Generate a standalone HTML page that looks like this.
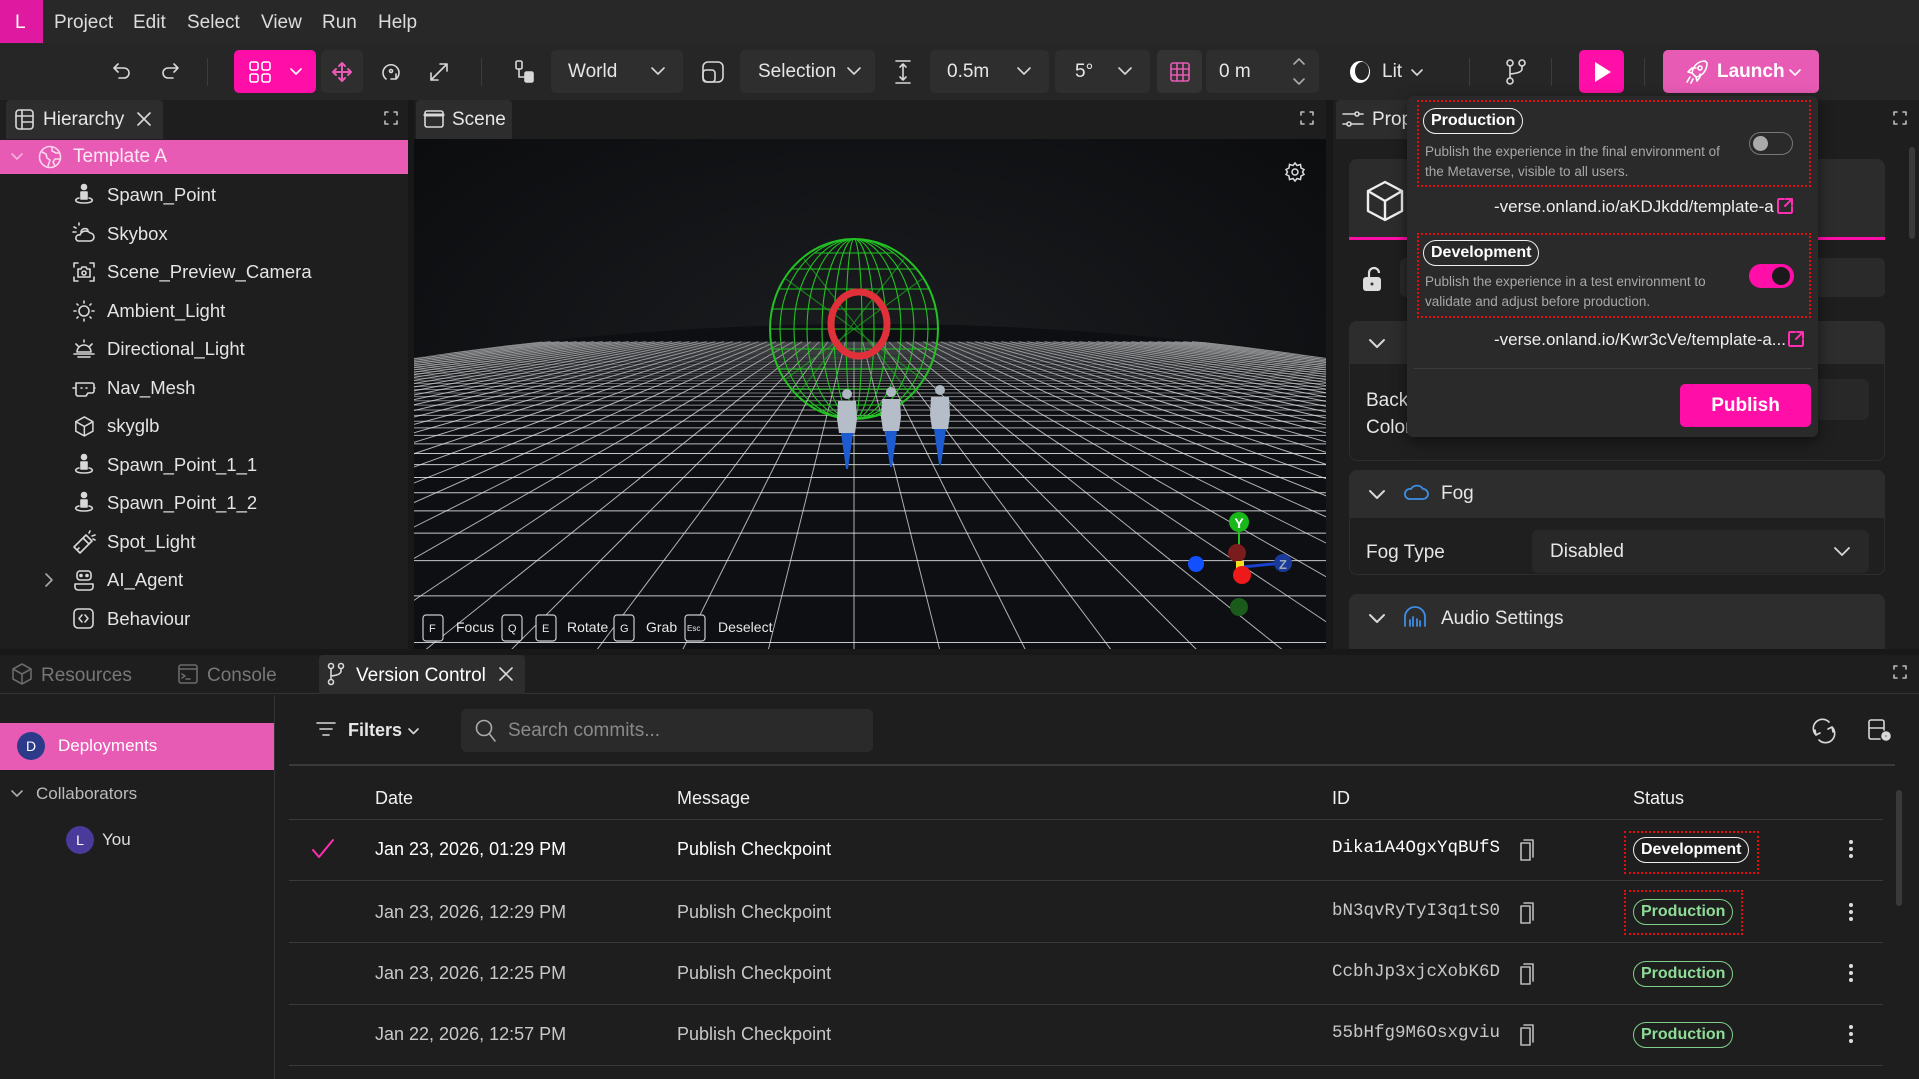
<!DOCTYPE html>
<html><head><meta charset="utf-8">
<style>
*{box-sizing:border-box;margin:0;padding:0}
html,body{width:1919px;height:1079px;overflow:hidden}
body{background:#1e1e1e;font-family:"Liberation Sans",sans-serif;color:#e6e6e6;position:relative}
.a{position:absolute}
.t{position:absolute;white-space:nowrap;line-height:1}
svg{position:absolute;overflow:visible}
.ic{fill:none;stroke:#d8d8d8;stroke-width:1.6;stroke-linecap:round;stroke-linejoin:round}
.btn{position:absolute;background:#2e2e2e;border-radius:5px;top:50px;height:43px}
.sep{position:absolute;top:58px;width:1px;height:28px;background:#3c3c3c}
.hi{font-size:18.5px;color:#e4e4e4}
.row{position:absolute;left:289px;width:1606px;height:1px;background:#3a3a3a}
.pill{position:absolute;height:26px;border-radius:13px;font-size:16px;font-weight:bold;padding:0 7px;line-height:23px}
</style></head><body>

<!-- menu bar -->
<div class="a" style="left:0;top:0;width:1919px;height:44px;background:#282828"></div>
<div class="a" style="left:0;top:0;width:43px;height:43px;background:#e01aa0"></div>
<div class="t" style="left:15px;top:13px;font-size:19px;color:#fff">L</div>
<div class="t" style="left:54px;top:13px;font-size:19px;color:#dcdcdc">Project</div>
<div class="t" style="left:133px;top:13px;font-size:19px;color:#dcdcdc">Edit</div>
<div class="t" style="left:187px;top:13px;font-size:19px;color:#dcdcdc">Select</div>
<div class="t" style="left:261px;top:13px;font-size:19px;color:#dcdcdc">View</div>
<div class="t" style="left:322px;top:13px;font-size:19px;color:#dcdcdc">Run</div>
<div class="t" style="left:378px;top:13px;font-size:19px;color:#dcdcdc">Help</div>

<!-- toolbar -->
<div class="a" style="left:0;top:44px;width:1919px;height:56px;background:#262626"></div>
<svg style="left:112px;top:61px" width="20" height="20" class="ic"><path d="M6 3 L2 7 L6 11 M2 7 H12 a5 5 0 0 1 0 10 H7"/></svg>
<svg style="left:160px;top:61px" width="20" height="20" class="ic"><path d="M14 3 L18 7 L14 11 M18 7 H8 a5 5 0 0 0 0 10 H13"/></svg>
<div class="sep" style="left:207px"></div>
<div class="btn" style="left:234px;width:82px;background:#ff0fa8"></div>
<svg style="left:249px;top:61px" width="22" height="22" class="ic"><g stroke="#fff"><rect x="1" y="1" width="8" height="8" rx="2"/><rect x="13" y="1" width="8" height="8" rx="2"/><rect x="1" y="13" width="8" height="8" rx="2"/><rect x="13" y="13" width="8" height="8" rx="2"/></g></svg>
<svg style="left:290px;top:68px" width="12" height="8" class="ic"><path d="M1 1 L6 6 L11 1" stroke="#fff"/></svg>
<div class="btn" style="left:321px;width:42px"></div>
<svg style="left:331px;top:61px" width="22" height="22" class="ic"><g stroke="#e85bb5" stroke-width="2"><path d="M11 2 V20 M2 11 H20 M8 5 L11 2 L14 5 M8 17 L11 20 L14 17 M5 8 L2 11 L5 14 M17 8 L20 11 L17 14"/></g></svg>
<svg style="left:380px;top:60px" width="22" height="24" class="ic"><path d="M6 19 A8 8 0 1 1 16 19 M16 19 L16 14 M16 19 L11 19"/><circle cx="11" cy="11" r="1.5"/></svg>
<svg style="left:428px;top:61px" width="22" height="22" class="ic"><path d="M3 19 L19 3 M12 3 H19 V10 M3 12 V19 H10"/></svg>
<div class="sep" style="left:481px"></div>
<svg style="left:514px;top:59px" width="22" height="26" class="ic"><rect x="2" y="2" width="6" height="8" rx="1.5"/><rect x="11" y="13" width="8" height="10" rx="1.5" fill="#d8d8d8"/><path d="M5 10 V18 H11"/></svg>
<div class="btn" style="left:551px;width:132px"></div>
<div class="t" style="left:568px;top:62px;font-size:19px">World</div>
<svg style="left:651px;top:67px" width="14" height="9" class="ic"><path d="M1 1 L7 7 L13 1"/></svg>
<svg style="left:702px;top:61px" width="22" height="22" class="ic"><rect x="1" y="1" width="20" height="20" rx="5"/><rect x="1" y="9" width="12" height="12" rx="3"/></svg>
<div class="btn" style="left:740px;width:135px"></div>
<div class="t" style="left:758px;top:62px;font-size:19px">Selection</div>
<svg style="left:847px;top:67px" width="14" height="9" class="ic"><path d="M1 1 L7 7 L13 1"/></svg>
<svg style="left:894px;top:59px" width="18" height="26" class="ic"><path d="M2 2 H16 M2 24 H16 M9 5 V21 M6 8 L9 5 L12 8 M6 18 L9 21 L12 18"/></svg>
<div class="btn" style="left:930px;width:119px"></div>
<div class="t" style="left:947px;top:62px;font-size:19px">0.5m</div>
<svg style="left:1017px;top:67px" width="14" height="9" class="ic"><path d="M1 1 L7 7 L13 1"/></svg>
<div class="btn" style="left:1055px;width:95px"></div>
<div class="t" style="left:1075px;top:62px;font-size:19px">5°</div>
<svg style="left:1118px;top:67px" width="14" height="9" class="ic"><path d="M1 1 L7 7 L13 1"/></svg>
<div class="btn" style="left:1157px;width:45px;background:#333"></div>
<svg style="left:1170px;top:62px" width="20" height="20" class="ic"><g stroke="#e85bb5" stroke-width="1.6"><rect x="1" y="1" width="18" height="18" rx="2"/><path d="M7 1 V19 M13 1 V19 M1 7 H19 M1 13 H19"/></g></svg>
<div class="btn" style="left:1206px;width:113px"></div>
<div class="t" style="left:1219px;top:62px;font-size:19px">0 m</div>
<svg style="left:1293px;top:58px" width="12" height="28" class="ic"><path d="M1 6 L6 1 L11 6 M1 21 L6 26 L11 21" stroke="#aaa"/></svg>
<svg style="left:1348px;top:59px" width="24" height="26"><ellipse cx="12" cy="13" rx="10" ry="11" fill="#fff"/><ellipse cx="14" cy="12" rx="7" ry="9" fill="#262626"/></svg>
<div class="t" style="left:1382px;top:62px;font-size:19px">Lit</div>
<svg style="left:1411px;top:69px" width="12" height="8" class="ic"><path d="M1 1 L6 6 L11 1"/></svg>
<div class="sep" style="left:1469px"></div>
<svg style="left:1505px;top:59px" width="22" height="26" class="ic"><circle cx="5" cy="4" r="3"/><circle cx="17" cy="4" r="3"/><circle cx="5" cy="22" r="3"/><path d="M5 7 V19 M17 7 V10 Q17 14 5 15"/></svg>
<div class="sep" style="left:1551px"></div>
<div class="btn" style="left:1579px;width:45px;background:#ff0fa8"></div>
<svg style="left:1593px;top:61px" width="20" height="22"><path d="M2 1 L18 11 L2 21 Z" fill="#fff"/></svg>
<div class="sep" style="left:1644px"></div>
<div class="btn" style="left:1663px;width:156px;background:#e85bb5"></div>
<svg style="left:1685px;top:59px" width="24" height="26" class="ic"><g stroke="#fff"><path d="M20 2 C12 2 8 8 7 14 L11 18 C17 17 22 12 22 4 Z M7 14 L3 13 L7 9 H11 M11 18 L12 22 L15 18 V15 M5 18 L2 23 M8 20 L6 24"/><circle cx="15" cy="9" r="2"/></g></svg>
<div class="t" style="left:1717px;top:62px;font-size:19px;font-weight:bold;color:#fff">Launch</div>
<svg style="left:1789px;top:69px" width="12" height="8" class="ic"><path d="M1 1 L6 6 L11 1" stroke="#fff"/></svg>

<!-- panel tab rows -->
<div class="a" style="left:0;top:100px;width:1919px;height:39px;background:#1e1e1e"></div>
<div class="a" style="left:6px;top:100px;width:157px;height:39px;background:#2d2d2d;border-radius:4px 4px 0 0"></div>
<svg style="left:15px;top:109px" width="20" height="22" class="ic"><rect x="1" y="1" width="17" height="19" rx="3"/><path d="M1 7 H18 M7 1 V20 M7 13 H18"/></svg>
<div class="t" style="left:43px;top:110px;font-size:19px">Hierarchy</div>
<svg style="left:137px;top:112px" width="14" height="14" class="ic"><path d="M1 1 L13 13 M13 1 L1 13"/></svg>
<svg style="left:384px;top:111px" width="14" height="14" class="ic"><path d="M1 4 V1 H4 M10 1 H13 V4 M13 10 V13 H10 M4 13 H1 V10" stroke="#bbb"/></svg>
<div class="a" style="left:408px;top:100px;width:6px;height:549px;background:#181818"></div>
<div class="a" style="left:416px;top:100px;width:96px;height:39px;background:#2d2d2d;border-radius:4px 4px 0 0"></div>
<svg style="left:424px;top:110px" width="20" height="18" class="ic"><rect x="1" y="1" width="18" height="16" rx="2"/><path d="M1 5 H19" stroke-width="3"/></svg>
<div class="t" style="left:452px;top:110px;font-size:19px">Scene</div>
<svg style="left:1300px;top:111px" width="14" height="14" class="ic"><path d="M1 4 V1 H4 M10 1 H13 V4 M13 10 V13 H10 M4 13 H1 V10" stroke="#bbb"/></svg>
<div class="a" style="left:1326px;top:100px;width:7px;height:549px;background:#181818"></div>
<div class="a" style="left:1336px;top:100px;width:80px;height:39px;background:#2d2d2d;border-radius:4px 4px 0 0"></div>
<svg style="left:1342px;top:108px" width="22" height="22" class="ic"><path d="M1 6 H13 M17 6 H21 M1 16 H5 M9 16 H21"/><circle cx="15" cy="6" r="2"/><circle cx="7" cy="16" r="2"/></svg>
<div class="t" style="left:1372px;top:110px;font-size:19px">Prop</div>
<svg style="left:1893px;top:111px" width="14" height="14" class="ic"><path d="M1 4 V1 H4 M10 1 H13 V4 M13 10 V13 H10 M4 13 H1 V10" stroke="#bbb"/></svg>

<!-- hierarchy -->
<div class="a" style="left:0;top:140px;width:408px;height:34px;background:#e85bb5"></div>
<svg style="left:11px;top:153px" width="12" height="8" class="ic"><path d="M1 1 L6 6 L11 1" stroke="#f5b3dc"/></svg>
<svg style="left:38px;top:145px" width="24" height="24" class="ic"><g stroke="#fbd5ec"><circle cx="12" cy="12" r="10.5"/><path d="M4 7 L8 9 L9 13 L12 15 L10 21 M14 2 L14 6 L18 8 L21 8 M22 14 L17 14 L15 17 L17 21"/></g></svg>
<div class="t" style="left:73px;top:147px;font-size:19px;color:#fde9f5">Template A</div>

<svg style="left:72px;top:184px" width="24" height="420" class="ic">
<g><circle cx="12" cy="3" r="2.5" fill="#d8d8d8"/><path d="M9 8 H15 V15 H9 Z" fill="#d8d8d8"/><path d="M7 14 C2 15 2 19 12 19 C22 19 22 15 17 14"/></g>
<g transform="translate(0,39)"><path d="M9 9 A4 4 0 0 1 16 7 M4 5 L2 4 M7 2 L7 0 M4 9 H1 M6 18 H18 A4 4 0 0 0 18 10 A6 6 0 0 0 8 12 A3 3 0 0 0 6 18"/></g>
<g transform="translate(0,77)"><path d="M2 6 V2 H6 M18 2 H22 V6 M22 16 V20 H18 M6 20 H2 V16 M6 8 H9 L10 6 H14 L15 8 H18 V16 H6 Z"/><circle cx="12" cy="12" r="2"/></g>
<g transform="translate(0,116)"><circle cx="12" cy="11" r="5"/><path d="M12 1 V3 M12 19 V21 M2 11 H4 M20 11 H22 M5 4 L6 5 M18 17 L19 18 M19 4 L18 5 M6 17 L5 18"/></g>
<g transform="translate(0,154)"><path d="M5 14 A7 7 0 0 1 19 14 Z M2 16 H22 M6 19 H18 M12 2 V4 M4 6 L6 8 M20 6 L18 8"/></g>
<g transform="translate(0,193)"><path d="M4 6 H20 A2 2 0 0 1 22 8 V14 A2 2 0 0 1 20 16 H16 L14 19 H6 A2 2 0 0 1 4 17 Z M1 11 H4 M22 11 H23 M9 11 H10 M14 11 H15"/></g>
<g transform="translate(0,231)"><path d="M12 1 L21 6 V16 L12 21 L3 16 V6 Z M3 6 L12 11 L21 6 M12 11 V21" transform="scale(0.95) translate(1,1)"/></g>
<g transform="translate(0,270)"><circle cx="12" cy="3" r="2.5" fill="#d8d8d8"/><path d="M9 8 H15 V15 H9 Z" fill="#d8d8d8"/><path d="M7 14 C2 15 2 19 12 19 C22 19 22 15 17 14"/></g>
<g transform="translate(0,308)"><circle cx="12" cy="3" r="2.5" fill="#d8d8d8"/><path d="M9 8 H15 V15 H9 Z" fill="#d8d8d8"/><path d="M7 14 C2 15 2 19 12 19 C22 19 22 15 17 14"/></g>
<g transform="translate(0,347)"><path d="M2 16 L8 22 L17 13 L11 7 Z M11 7 L14 4 L20 10 L17 13 M5 19 L7 17 M17 2 L18 0 M20 5 L23 4 M21 8 L23 9"/></g>
<g transform="translate(0,385)"><rect x="5" y="2" width="14" height="9" rx="3"/><path d="M3 15 H21 V18 A3 3 0 0 1 18 21 H6 A3 3 0 0 1 3 18 Z"/><circle cx="9" cy="6.5" r="1" fill="#d8d8d8"/><circle cx="15" cy="6.5" r="1" fill="#d8d8d8"/></g>
</svg>
<svg style="left:72px;top:607px" width="24" height="24" class="ic"><rect x="2" y="2" width="19" height="19" rx="4"/><path d="M10 8 L7 11.5 L10 15 M13 8 L16 11.5 L13 15"/></svg>
<svg style="left:45px;top:573px" width="8" height="14" class="ic"><path d="M1 1 L7 7 L1 13" stroke="#aaa"/></svg>
<div class="t hi" style="left:107px;top:186px">Spawn_Point</div>
<div class="t hi" style="left:107px;top:225px">Skybox</div>
<div class="t hi" style="left:107px;top:263px">Scene_Preview_Camera</div>
<div class="t hi" style="left:107px;top:302px">Ambient_Light</div>
<div class="t hi" style="left:107px;top:340px">Directional_Light</div>
<div class="t hi" style="left:107px;top:379px">Nav_Mesh</div>
<div class="t hi" style="left:107px;top:417px">skyglb</div>
<div class="t hi" style="left:107px;top:456px">Spawn_Point_1_1</div>
<div class="t hi" style="left:107px;top:494px">Spawn_Point_1_2</div>
<div class="t hi" style="left:107px;top:533px">Spot_Light</div>
<div class="t hi" style="left:107px;top:571px">AI_Agent</div>
<div class="t hi" style="left:107px;top:610px">Behaviour</div>

<!-- scene -->
<svg id="scene" style="left:414px;top:139px;overflow:hidden" width="912" height="510" viewBox="0 0 912 510">
<defs>
<radialGradient id="sky" cx="0.5" cy="0.45" r="0.7"><stop offset="0" stop-color="#1b1d20"/><stop offset="1" stop-color="#0b0c0e"/></radialGradient>
<clipPath id="cl"><path d="M0 219 Q456 151 912 219 L912 510 L0 510 Z"/></clipPath>
<linearGradient id="fade" x1="0" y1="0" x2="0" y2="1"><stop offset="0" stop-color="#0d0f13" stop-opacity="0.45"/><stop offset="1" stop-color="#0d0f13" stop-opacity="0"/></linearGradient>
</defs>
<rect width="912" height="510" fill="url(#sky)"/>
<path d="M0 219 Q456 151 912 219 L912 510 L0 510 Z" fill="#0d0f13"/>
<g id="grid" clip-path="url(#cl)" stroke="#e8e8e8" stroke-width="1"></g>
<rect x="0" y="170" width="912" height="90" fill="url(#fade)" clip-path="url(#cl)"/>
<g fill="none" stroke="#22c322" stroke-width="1.1">
<ellipse cx="440" cy="190" rx="84" ry="90" stroke-width="2"/>
<ellipse cx="440" cy="190" rx="60" ry="90"/><ellipse cx="440" cy="190" rx="32" ry="90"/><ellipse cx="440" cy="190" rx="8" ry="90"/>
<ellipse cx="440" cy="190" rx="74" ry="90"/><ellipse cx="440" cy="190" rx="47" ry="90"/><ellipse cx="440" cy="190" rx="20" ry="90"/>
<path d="M378 130 H502 M364 150 H516 M358 170 H522 M356 190 H524 M358 210 H522 M364 230 H516 M376 250 H504 M396 266 H484 M400 114 H480"/>
<path d="M372 140 L508 240 M508 140 L372 240 M390 120 L500 260 M490 120 L380 260" stroke-opacity="0.6"/>
</g>
<ellipse cx="445" cy="185" rx="28" ry="32" fill="none" stroke="#e0303a" stroke-width="7"/>
<g>
<g transform="translate(433,250)"><circle cx="0" cy="5" r="5" fill="#aeb8c2"/><path d="M-9 12 H9 L10 30 L8 44 H-8 L-10 30 Z" fill="#b5bec8"/><path d="M-6 44 H6 L1 80 H-1 Z" fill="#1c5cd0"/></g>
<g transform="translate(477,248)"><circle cx="0" cy="5" r="5" fill="#aeb8c2"/><path d="M-9 12 H9 L10 30 L8 44 H-8 L-10 30 Z" fill="#b5bec8"/><path d="M-6 44 H6 L1 80 H-1 Z" fill="#1c5cd0"/></g>
<g transform="translate(526,246)"><circle cx="0" cy="5" r="5" fill="#aeb8c2"/><path d="M-9 12 H9 L10 30 L8 44 H-8 L-10 30 Z" fill="#b5bec8"/><path d="M-6 44 H6 L1 80 H-1 Z" fill="#1c5cd0"/></g>
</g>
<g>
<line x1="825" y1="390" x2="825" y2="430" stroke="#22c322" stroke-width="2"/>
<line x1="828" y1="428" x2="869" y2="424" stroke="#1c40d0" stroke-width="3"/>
<circle cx="825" cy="383" r="10" fill="#18b818"/><text x="825" y="389" font-size="14" font-weight="bold" fill="#fff" text-anchor="middle">Y</text>
<circle cx="782" cy="425" r="8" fill="#1250ff"/>
<circle cx="869" cy="424" r="9" fill="#1a3a9a"/><text x="869" y="430" font-size="13" font-weight="bold" fill="#9ab" text-anchor="middle">Z</text>
<circle cx="823" cy="414" r="9" fill="#7a1c1c"/>
<rect x="822" y="422" width="8" height="9" fill="#f0e020"/>
<circle cx="828" cy="436" r="9" fill="#ee1a1a"/>
<circle cx="825" cy="468" r="9" fill="#1a5a1a"/>
</g>
<g transform="translate(870,22)" fill="none" stroke="#ddd" stroke-width="1.5"><circle cx="11" cy="11" r="3"/><path d="M11 2 L13 4.5 L16.5 3.5 L17 7 L20 8.5 L18.5 11 L20 13.5 L17 15 L16.5 18.5 L13 17.5 L11 20 L9 17.5 L5.5 18.5 L5 15 L2 13.5 L3.5 11 L2 8.5 L5 7 L5.5 3.5 L9 4.5 Z"/></g>
<g font-size="14" fill="#e8e8e8">
<g fill="#0d0f13" stroke="#ccc" stroke-width="1.2"><rect x="9" y="476" width="20" height="26" rx="3"/><rect x="88" y="476" width="20" height="26" rx="3"/><rect x="122" y="476" width="20" height="26" rx="3"/><rect x="200" y="476" width="20" height="26" rx="3"/><rect x="271" y="476" width="20" height="26" rx="3"/></g>
<text x="15" y="493" font-size="11">F</text><text x="94" y="493" font-size="11">Q</text><text x="128" y="493" font-size="11">E</text><text x="206" y="493" font-size="11">G</text><text x="273" y="492" font-size="8">Esc</text>
<text x="42" y="493">Focus</text><text x="153" y="493">Rotate</text><text x="232" y="493">Grab</text><text x="304" y="493">Deselect</text>
</g>
</svg>

<!-- properties panel -->
<div class="a" style="left:1333px;top:139px;width:586px;height:510px;background:#1e1e1e"></div>
<div class="a" style="left:1349px;top:159px;width:536px;height:81px;background:#2c2c2c;border-radius:8px 8px 0 0;border-bottom:3px solid #ff0fa8"></div>
<svg style="left:1365px;top:180px" width="40" height="42" class="ic"><path d="M20 2 L37 11 V31 L20 40 L3 31 V11 Z M3 11 L20 21 L37 11 M20 21 V40" stroke="#eee" stroke-width="2.4"/></svg>
<div class="a" style="left:1400px;top:258px;width:485px;height:39px;background:#2a2a2a;border-radius:6px"></div>
<svg style="left:1361px;top:266px" width="22" height="26"><path d="M8 11 V7 A5 5 0 0 1 18 7" fill="none" stroke="#ddd" stroke-width="2.2"/><rect x="2" y="11" width="18" height="14" rx="3" fill="#ddd"/><circle cx="11" cy="18" r="1.5" fill="#333"/></svg>
<div class="a" style="left:1349px;top:321px;width:536px;height:140px;border:1px solid #2d2d2d;border-radius:8px;background:#1f1f1f"></div>
<div class="a" style="left:1349px;top:321px;width:536px;height:43px;background:#2d2d2d;border-radius:8px 8px 0 0"></div>
<svg style="left:1369px;top:339px" width="16" height="10" class="ic"><path d="M1 1 L8 8 L15 1" stroke-width="2"/></svg>
<div class="t" style="left:1366px;top:391px;font-size:19px">Back</div>
<div class="t" style="left:1366px;top:418px;font-size:19px">Color</div>
<div class="a" style="left:1530px;top:379px;width:339px;height:41px;background:#282828;border-radius:6px"></div>
<div class="a" style="left:1349px;top:470px;width:536px;height:105px;border:1px solid #2d2d2d;border-radius:8px;background:#1f1f1f"></div>
<div class="a" style="left:1349px;top:470px;width:536px;height:48px;background:#2d2d2d;border-radius:8px 8px 0 0"></div>
<svg style="left:1369px;top:490px" width="16" height="10" class="ic"><path d="M1 1 L8 8 L15 1" stroke-width="2"/></svg>
<svg style="left:1403px;top:483px" width="26" height="18" class="ic"><path d="M6 16 H20 A5 5 0 0 0 20 6 A7 7 0 0 0 8 6 A5 5 0 0 0 6 16 Z" stroke="#3d8ee6" stroke-width="1.8"/></svg>
<div class="t" style="left:1441px;top:484px;font-size:19px">Fog</div>
<div class="t" style="left:1366px;top:543px;font-size:19px">Fog Type</div>
<div class="a" style="left:1532px;top:530px;width:337px;height:43px;background:#282828;border-radius:6px"></div>
<div class="t" style="left:1550px;top:542px;font-size:19px">Disabled</div>
<svg style="left:1834px;top:547px" width="16" height="10" class="ic"><path d="M1 1 L8 8 L15 1" stroke-width="1.8"/></svg>
<div class="a" style="left:1349px;top:594px;width:536px;height:55px;background:#2d2d2d;border-radius:8px 8px 0 0"></div>
<svg style="left:1369px;top:614px" width="16" height="10" class="ic"><path d="M1 1 L8 8 L15 1" stroke-width="2"/></svg>
<svg style="left:1403px;top:605px" width="24" height="24" class="ic"><g stroke="#3d8ee6" stroke-width="1.8"><path d="M2 18 V12 A10 10 0 0 1 22 12 V18 M2 14 V21 M22 14 V21 M7 15 V21 M10 12 V21 M14 14 V21 M17 16 V21"/></g></svg>
<div class="t" style="left:1441px;top:609px;font-size:19px">Audio Settings</div>
<div class="a" style="left:1909px;top:147px;width:6px;height:92px;background:#3a3a3a;border-radius:3px"></div>

<!-- popup -->
<div class="a" style="left:1407px;top:96px;width:411px;height:341px;background:#2a2a2a;border-radius:6px;box-shadow:0 4px 14px rgba(0,0,0,.5)"></div>
<div class="a" style="left:1417px;top:100px;width:394px;height:87px;border:2px dotted #e01010"></div>
<div class="pill" style="left:1423px;top:108px;border:1.5px solid #eee;color:#fff">Production</div>
<div class="t" style="left:1425px;top:142px;font-size:13.5px;color:#a8a8a8;line-height:20px">Publish the experience in the final environment of<br>the Metaverse, visible to all users.</div>
<div class="a" style="left:1749px;top:132px;width:44px;height:23px;border:1.5px solid #777;border-radius:12px"></div>
<div class="a" style="left:1753px;top:136px;width:15px;height:15px;border-radius:50%;background:#aaa"></div>
<div class="t" style="left:1494px;top:198px;width:270px;text-align:right;font-size:17px;color:#eee">-verse.onland.io/aKDJkdd/template-a</div>
<svg style="left:1776px;top:197px" width="18" height="18" class="ic"><path d="M8 2 H3 A1.5 1.5 0 0 0 2 3 V15 A1.5 1.5 0 0 0 3 16 H15 A1.5 1.5 0 0 0 16 15 V10 M10 2 H16 V8 M16 2 L9 9" stroke="#ff2fb4" stroke-width="2"/></svg>
<div class="a" style="left:1417px;top:233px;width:394px;height:85px;border:2px dotted #e01010"></div>
<div class="pill" style="left:1423px;top:240px;border:1.5px solid #eee;color:#fff">Development</div>
<div class="t" style="left:1425px;top:272px;font-size:13.5px;color:#a8a8a8;line-height:20px">Publish the experience in a test environment to<br>validate and adjust before production.</div>
<div class="a" style="left:1749px;top:264px;width:45px;height:24px;border-radius:12px;background:#ff0fa8"></div>
<div class="a" style="left:1772px;top:267px;width:18px;height:18px;border-radius:50%;background:#1a1a1a"></div>
<div class="t" style="left:1494px;top:331px;width:281px;text-align:right;font-size:17px;color:#eee">-verse.onland.io/Kwr3cVe/template-a...</div>
<svg style="left:1787px;top:330px" width="18" height="18" class="ic"><path d="M8 2 H3 A1.5 1.5 0 0 0 2 3 V15 A1.5 1.5 0 0 0 3 16 H15 A1.5 1.5 0 0 0 16 15 V10 M10 2 H16 V8 M16 2 L9 9" stroke="#ff2fb4" stroke-width="2"/></svg>
<div class="a" style="left:1414px;top:368px;width:398px;height:1px;background:#3c3c3c"></div>
<div class="a" style="left:1680px;top:384px;width:131px;height:43px;background:#ff0fa8;border-radius:5px"></div>
<div class="t" style="left:1680px;top:396px;width:131px;text-align:center;font-size:19px;font-weight:bold;color:#fff">Publish</div>

<!-- bottom panel -->
<div class="a" style="left:0;top:649px;width:1919px;height:6px;background:#181818"></div>
<div class="a" style="left:0;top:655px;width:1919px;height:39px;background:#1e1e1e;border-bottom:1px solid #333"></div>
<svg style="left:12px;top:663px" width="20" height="22" class="ic"><path d="M10 1 L19 6 V16 L10 21 L1 16 V6 Z M1 6 L10 11 L19 6 M10 11 V21" stroke="#6a6a6a"/></svg>
<div class="t" style="left:41px;top:666px;font-size:19px;color:#777">Resources</div>
<svg style="left:178px;top:664px" width="20" height="20" class="ic"><rect x="1" y="1" width="18" height="18" rx="2" stroke="#6a6a6a"/><path d="M1 5 H19 M4 10 L7 12 L4 14 M8 15 H12" stroke="#6a6a6a"/></svg>
<div class="t" style="left:207px;top:666px;font-size:19px;color:#777">Console</div>
<div class="a" style="left:319px;top:655px;width:206px;height:39px;background:#2d2d2d;border-radius:4px 4px 0 0"></div>
<svg style="left:327px;top:662px" width="20" height="24" class="ic"><circle cx="4" cy="4" r="2.5"/><circle cx="14" cy="4" r="2.5"/><circle cx="4" cy="20" r="2.5"/><path d="M4 7 V17 M14 7 V9 Q14 13 4 14"/></svg>
<div class="t" style="left:356px;top:666px;font-size:19px;color:#fff">Version Control</div>
<svg style="left:499px;top:667px" width="14" height="14" class="ic"><path d="M1 1 L13 13 M13 1 L1 13"/></svg>
<svg style="left:1893px;top:665px" width="14" height="14" class="ic"><path d="M1 4 V1 H4 M10 1 H13 V4 M13 10 V13 H10 M4 13 H1 V10" stroke="#bbb"/></svg>
<div class="a" style="left:274px;top:695px;width:1px;height:384px;background:#333"></div>
<div class="a" style="left:0;top:723px;width:274px;height:47px;background:#e85bb5"></div>
<div class="a" style="left:17px;top:732px;width:28px;height:28px;border-radius:50%;background:#2c3a8a"></div>
<div class="t" style="left:17px;top:739px;width:28px;text-align:center;font-size:14px;color:#fff">D</div>
<div class="t" style="left:58px;top:737px;font-size:17px;color:#fff">Deployments</div>
<svg style="left:11px;top:790px" width="12" height="8" class="ic"><path d="M1 1 L6 6 L11 1" stroke="#aaa"/></svg>
<div class="t" style="left:36px;top:785px;font-size:17px;color:#bbb">Collaborators</div>
<div class="a" style="left:66px;top:826px;width:28px;height:28px;border-radius:50%;background:#4a3a9a"></div>
<div class="t" style="left:66px;top:833px;width:28px;text-align:center;font-size:14px;color:#fff">L</div>
<div class="t" style="left:102px;top:831px;font-size:17px;color:#ddd">You</div>

<svg style="left:316px;top:721px" width="20" height="18" class="ic"><path d="M1 2 H19 M4 8 H16 M7 14 H13"/></svg>
<div class="t" style="left:348px;top:721px;font-size:18px;font-weight:bold;color:#e6e6e6">Filters</div>
<svg style="left:408px;top:728px" width="11" height="7" class="ic"><path d="M1 1 L5.5 5.5 L10 1"/></svg>
<div class="a" style="left:461px;top:709px;width:412px;height:43px;background:#2a2a2a;border-radius:6px"></div>
<svg style="left:475px;top:719px" width="22" height="24" class="ic"><circle cx="9" cy="9" r="7.5" stroke="#aaa"/><path d="M14.5 15 L20 22" stroke="#aaa"/></svg>
<div class="t" style="left:508px;top:721px;font-size:19px;color:#8a8a8a">Search commits...</div>
<svg style="left:1812px;top:717px" width="24" height="28" class="ic"><path d="M17 5 A9 9 0 0 0 4 18 M4 18 L3 13 M4 18 L8 16 M7 23 A9 9 0 0 0 20 10 M20 10 L21 15 M20 10 L16 12"/></svg>
<svg style="left:1867px;top:719px" width="26" height="24" class="ic"><path d="M13 20 H4 A2 2 0 0 1 2 18 V3 A2 2 0 0 1 4 1 H15 A2 2 0 0 1 17 3 V11 M2 9 H17"/><circle cx="19" cy="17" r="4" fill="#d8d8d8"/><circle cx="19" cy="17" r="1.4" fill="#1e1e1e"/></svg>

<div class="row" style="top:764px;height:2px;background:#3a3a3a"></div>
<div class="t" style="left:375px;top:789px;font-size:18px;color:#f0f0f0">Date</div>
<div class="t" style="left:677px;top:789px;font-size:18px;color:#f0f0f0">Message</div>
<div class="t" style="left:1332px;top:789px;font-size:18px;color:#f0f0f0">ID</div>
<div class="t" style="left:1633px;top:789px;font-size:18px;color:#f0f0f0">Status</div>
<div class="row" style="top:819px;width:1594px"></div>
<div class="row" style="top:880px;width:1594px"></div>
<div class="row" style="top:942px;width:1594px"></div>
<div class="row" style="top:1004px;width:1594px"></div>
<div class="row" style="top:1065px;width:1594px"></div>
<div class="a" style="left:1896px;top:790px;width:6px;height:116px;background:#3a3a3a;border-radius:3px"></div>

<svg style="left:311px;top:838px" width="24" height="22" class="ic"><path d="M2 12 L8 19 L22 2" stroke="#ff2fb4" stroke-width="2"/></svg>
<div class="t" style="left:375px;top:840px;font-size:18px;color:#fff">Jan 23, 2026, 01:29 PM</div>
<div class="t" style="left:677px;top:840px;font-size:18px;color:#fff">Publish Checkpoint</div>
<div class="t" style="left:1332px;top:840px;font-size:17.5px;color:#fff;font-family:'Liberation Mono',monospace">Dika1A4OgxYqBUfS</div>
<div class="t" style="left:375px;top:903px;font-size:18px;color:#c8c8c8">Jan 23, 2026, 12:29 PM</div>
<div class="t" style="left:677px;top:903px;font-size:18px;color:#c8c8c8">Publish Checkpoint</div>
<div class="t" style="left:1332px;top:903px;font-size:17.5px;color:#c8c8c8;font-family:'Liberation Mono',monospace">bN3qvRyTyI3q1tS0</div>
<div class="t" style="left:375px;top:964px;font-size:18px;color:#c8c8c8">Jan 23, 2026, 12:25 PM</div>
<div class="t" style="left:677px;top:964px;font-size:18px;color:#c8c8c8">Publish Checkpoint</div>
<div class="t" style="left:1332px;top:964px;font-size:17.5px;color:#c8c8c8;font-family:'Liberation Mono',monospace">CcbhJp3xjcXobK6D</div>
<div class="t" style="left:375px;top:1025px;font-size:18px;color:#c8c8c8">Jan 22, 2026, 12:57 PM</div>
<div class="t" style="left:677px;top:1025px;font-size:18px;color:#c8c8c8">Publish Checkpoint</div>
<div class="t" style="left:1332px;top:1025px;font-size:17.5px;color:#c8c8c8;font-family:'Liberation Mono',monospace">55bHfg9M6Osxgviu</div>

<svg style="left:1519px;top:838px" width="16" height="24" class="ic"><path d="M5 2 H14 V19 M2 5 H11 V22 H2 Z" stroke="#bbb"/></svg>
<svg style="left:1519px;top:901px" width="16" height="24" class="ic"><path d="M5 2 H14 V19 M2 5 H11 V22 H2 Z" stroke="#bbb"/></svg>
<svg style="left:1519px;top:962px" width="16" height="24" class="ic"><path d="M5 2 H14 V19 M2 5 H11 V22 H2 Z" stroke="#bbb"/></svg>
<svg style="left:1519px;top:1023px" width="16" height="24" class="ic"><path d="M5 2 H14 V19 M2 5 H11 V22 H2 Z" stroke="#bbb"/></svg>

<div class="a" style="left:1624px;top:831px;width:135px;height:43px;border:2px dotted #e01010"></div>
<div class="pill" style="left:1633px;top:837px;border:1.5px solid #eee;color:#fff">Development</div>
<div class="a" style="left:1624px;top:890px;width:119px;height:45px;border:2px dotted #e01010"></div>
<div class="pill" style="left:1633px;top:899px;border:1.5px solid #7fcf8a;color:#8fdc98">Production</div>
<div class="pill" style="left:1633px;top:961px;border:1.5px solid #7fcf8a;color:#8fdc98">Production</div>
<div class="pill" style="left:1633px;top:1022px;border:1.5px solid #7fcf8a;color:#8fdc98">Production</div>
<svg style="left:1848px;top:839px" width="6" height="205"><g fill="#ddd"><circle cx="3" cy="3" r="2"/><circle cx="3" cy="10" r="2"/><circle cx="3" cy="17" r="2"/><circle cx="3" cy="66" r="2"/><circle cx="3" cy="73" r="2"/><circle cx="3" cy="80" r="2"/><circle cx="3" cy="127" r="2"/><circle cx="3" cy="134" r="2"/><circle cx="3" cy="141" r="2"/><circle cx="3" cy="188" r="2"/><circle cx="3" cy="195" r="2"/><circle cx="3" cy="202" r="2"/></g></svg>

<script>
(function(){
var g=document.getElementById('grid'),s='';
var f=520,h=2,cx=440,hy=168,W=912;
function Y(z){return hy+f*h/z;}
function Xp(X,z){return cx+f*X/z;}
var zn=2.6,zf=30;
for(var X=-30;X<=30;X+=0.5){s+='<line x1="'+Xp(X,zf)+'" y1="'+Y(zf)+'" x2="'+Xp(X,zn)+'" y2="'+Y(zn)+'" stroke-opacity="0.75"/>';}
for(var z=zn;z<=zf;z+=0.5){var y=Y(z);var op=Math.max(0.25,Math.min(0.85,6/z));s+='<line x1="0" y1="'+y+'" x2="'+W+'" y2="'+y+'" stroke-opacity="'+op+'"/>';}
g.innerHTML=s;
})();
</script>
</body></html>
